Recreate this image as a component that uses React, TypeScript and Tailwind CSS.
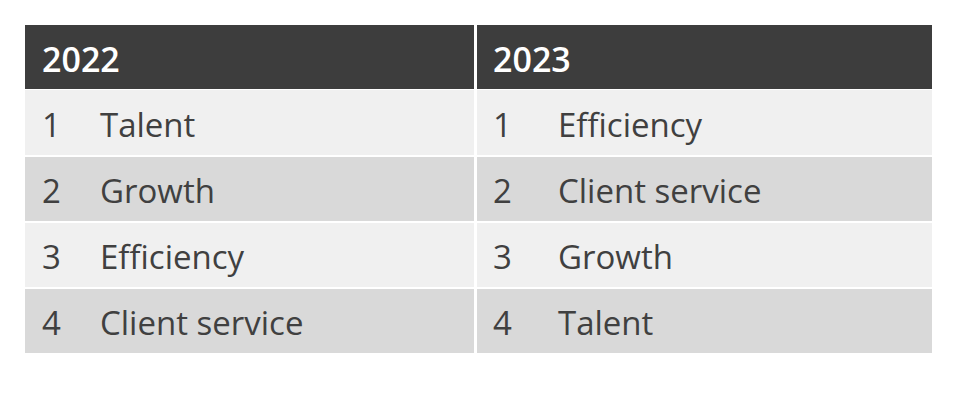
const left = ["Talent", "Growth", "Efficiency", "Client service"];
const right = ["Efficiency", "Client service", "Growth", "Talent"];

function Column({
  year,
  items,
  width,
  numPad,
  textPad,
}: {
  year: string;
  items: string[];
  width: string;
  numPad: string;
  textPad: string;
}) {
  return (
    <div className={`flex flex-col ${width}`}>
      <div className={`flex h-[64px] items-center bg-[#3d3d3d] pt-[5px] ${numPad} text-[34px] font-semibold text-white`}>
        {year}
      </div>
      {items.map((item, i) => (
        <div
          key={item}
          className={`flex items-center pt-[4px] text-[33px] text-[#404040] ${
            i === 0 ? "mt-[1px] h-[65px]" : "mt-[2px] h-[64px]"
          } ${i % 2 === 0 ? "bg-[#f0f0f0]" : "bg-[#d9d9d9]"} ${numPad}`}
        >
          <span className={textPad}>{i + 1}</span>
          <span>{item}</span>
        </div>
      ))}
    </div>
  );
}

export default function App() {
  return (
    <div
      className="h-[400px] w-[960px] bg-white pl-[25px] pt-[25px]"
      style={{ fontFamily: '"Open Sans", "Noto Sans", sans-serif' }}
    >
      <div className="flex gap-[3px]">
        <Column year="2022" items={left} width="w-[449px]" numPad="pl-[17px]" textPad="w-[58px]" />
        <Column year="2023" items={right} width="w-[455px]" numPad="pl-[16px]" textPad="w-[65px]" />
      </div>
    </div>
  );
}
